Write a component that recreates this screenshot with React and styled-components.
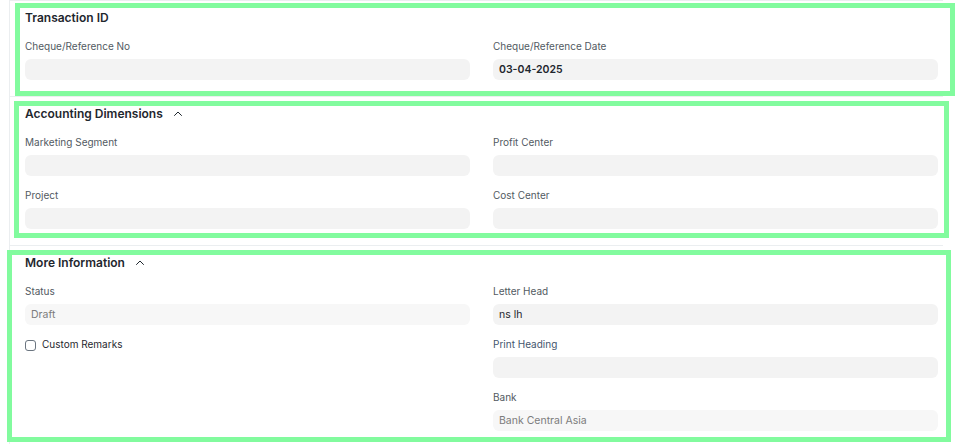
import React from "react";
import styled, { createGlobalStyle } from "styled-components";

const Global = createGlobalStyle`
  html, body { margin: 0; padding: 0; background: #ffffff; }
  body { font-family: Inter, "Noto Sans", sans-serif; -webkit-font-smoothing: antialiased; }
  * { box-sizing: border-box; }
`;

const Stage = styled.div`
  position: relative;
  width: 956px;
  height: 444px;
  overflow: hidden;
`;

const Card = styled.div`
  margin-left: 9px;
  width: 934px;
  border-left: 1px solid #ebeef0;
`;

const Section = styled.section`
  border-top: 1px solid #ebeef0;
  padding: 9px 5px 16px 15px;
`;

const SectionHead = styled.div`
  display: flex;
  align-items: center;
  gap: 10px;
  height: 16px;
  margin-bottom: 13px;
`;

const Title = styled.h3`
  margin: 0;
  font-size: 12px;
  line-height: 16px;
  font-weight: 600;
  color: #1f272e;
`;

const Chevron = styled.svg`
  width: 10px;
  height: 10px;
  display: block;
`;

const Grid = styled.div`
  display: grid;
  grid-template-columns: 445px 445px;
  column-gap: 23px;
  align-items: start;
`;

const Column = styled.div`
  display: flex;
  flex-direction: column;
  gap: 12px;
`;

const Field = styled.div`
  display: flex;
  flex-direction: column;
  gap: 5px;
`;

const Label = styled.label`
  font-size: 10px;
  line-height: 15px;
  color: ${(p) => (p.$accent ? "#44566e" : "#525a62")};
`;

const Input = styled.div`
  height: 21px;
  border-radius: 6px;
  background: ${(p) => (p.$readOnly ? "#f7f7f7" : "#f3f3f3")};
  padding: 0 6px;
  display: flex;
  align-items: center;
  font-size: 10.5px;
  color: ${(p) => (p.$readOnly ? "#7c7c7c" : "#1f272e")};
  font-weight: ${(p) => (p.$bold ? 600 : 400)};
`;

const CheckRow = styled.div`
  display: flex;
  align-items: center;
  gap: 6px;
  height: 15px;
`;

const Box = styled.span`
  width: 11px;
  height: 11px;
  border: 1px solid #6b7580;
  border-radius: 3px;
  background: #fff;
  margin-top: 2px;
`;

const CheckText = styled.span`
  font-size: 10px;
  line-height: 15px;
  color: #1f272e;
`;

const Highlight = styled.div`
  position: absolute;
  border: 5px solid #82fb9e;
  pointer-events: none;
`;

const Up = () => (
  <Chevron viewBox="0 0 10 10" fill="none">
    <path d="M1.5 6.5 L5 3 L8.5 6.5" stroke="#1f272e" strokeWidth="1" strokeLinecap="round" strokeLinejoin="round" />
  </Chevron>
);

export default function App() {
  return (
    <Stage>
      <Global />
      <Card>
        <Section>
          <SectionHead>
            <Title>Transaction ID</Title>
          </SectionHead>
          <Grid>
            <Column>
              <Field>
                <Label>Cheque/Reference No</Label>
                <Input />
              </Field>
            </Column>
            <Column>
              <Field>
                <Label>Cheque/Reference Date</Label>
                <Input $bold>03-04-2025</Input>
              </Field>
            </Column>
          </Grid>
        </Section>

        <Section>
          <SectionHead>
            <Title>Accounting Dimensions</Title>
            <Up />
          </SectionHead>
          <Grid>
            <Column>
              <Field>
                <Label>Marketing Segment</Label>
                <Input />
              </Field>
              <Field>
                <Label>Project</Label>
                <Input />
              </Field>
            </Column>
            <Column>
              <Field>
                <Label>Profit Center</Label>
                <Input />
              </Field>
              <Field>
                <Label>Cost Center</Label>
                <Input />
              </Field>
            </Column>
          </Grid>
        </Section>

        <Section>
          <SectionHead>
            <Title>More Information</Title>
            <Up />
          </SectionHead>
          <Grid>
            <Column>
              <Field>
                <Label>Status</Label>
                <Input $readOnly>Draft</Input>
              </Field>
              <CheckRow>
                <Box />
                <CheckText>Custom Remarks</CheckText>
              </CheckRow>
            </Column>
            <Column>
              <Field>
                <Label>Letter Head</Label>
                <Input>ns lh</Input>
              </Field>
              <Field>
                <Label $accent>Print Heading</Label>
                <Input />
              </Field>
              <Field>
                <Label>Bank</Label>
                <Input $readOnly>Bank Central Asia</Input>
              </Field>
            </Column>
          </Grid>
        </Section>
      </Card>

      <Highlight style={{ left: 15, top: 3, width: 940, height: 93 }} />
      <Highlight style={{ left: 14, top: 101, width: 935, height: 137 }} />
      <Highlight style={{ left: 7, top: 250, width: 944, height: 192 }} />
    </Stage>
  );
}
